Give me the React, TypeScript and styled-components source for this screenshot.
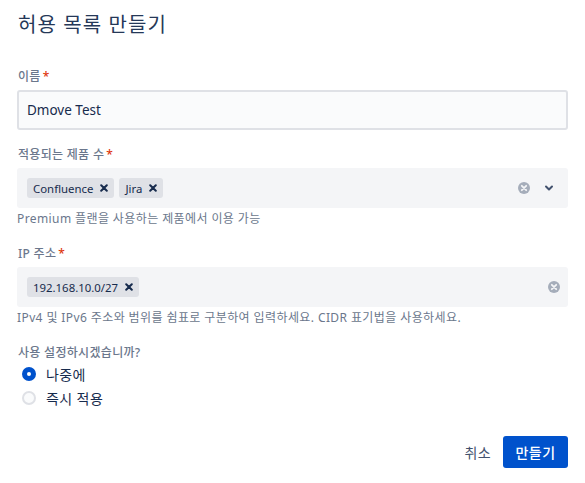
import React from "react";
import styled, { createGlobalStyle } from "styled-components";

const Global = createGlobalStyle`
  html, body { margin: 0; padding: 0; background: #fff; }
  body { font-family: "Noto Sans", "Noto Sans CJK KR", sans-serif; color: #172B4D; }
  * { box-sizing: border-box; }
`;

const Page = styled.div`
  width: 585px;
  height: 483px;
  padding: 13px 17px 0 17px;
  display: flex;
  flex-direction: column;
`;

const Title = styled.h1`
  margin: 0 0 0 1px;
  font-size: 20px;
  line-height: 24px;
  font-weight: 400;
  color: #253858;
  letter-spacing: 1.1px;
`;

const Field = styled.div<{ $top: number }>`
  display: flex;
  flex-direction: column;
  margin-top: ${(p) => p.$top}px;
`;

const Label = styled.label`
  font-size: 12px;
  line-height: 16px;
  font-weight: 500;
  color: #6B778C;
  margin: 0 0 5px 1px;
  letter-spacing: 0.3px;
`;

const Req = styled.span`
  color: #DE350B;
  margin-left: 2px;
`;

const TextInput = styled.div`
  height: 40px;
  background: #FAFBFC;
  border: 2px solid #DFE1E6;
  border-radius: 3px;
  display: flex;
  align-items: center;
  padding: 0 8px;
  font-size: 13.5px;
  color: #172B4D;
`;

const SelectBox = styled.div`
  height: 40px;
  background: #F4F5F7;
  border: 2px solid #F4F5F7;
  border-radius: 3px;
  display: flex;
  align-items: center;
  padding: 0 0 0 8px;
`;

const Tags = styled.div`
  flex: 1;
  display: flex;
  gap: 5px;
  align-items: center;
`;

const Tag = styled.span`
  height: 20px;
  display: inline-flex;
  align-items: center;
  background: #DFE1E6;
  border-radius: 3px;
  padding: 0 4px 0 6px;
  font-size: 11.4px;
  color: #172B4D;
  gap: 5px;
`;

const TagX = styled.span`
  width: 12px;
  height: 14px;
  display: inline-flex;
  align-items: center;
  justify-content: center;
`;

const Indicators = styled.div<{ $right: number }>`
  display: flex;
  align-items: center;
  gap: 12px;
  padding-right: ${(p) => p.$right}px;
`;

const Help = styled.div`
  font-size: 12px;
  line-height: 16px;
  color: #6B778C;
  margin: 3px 0 0 0;
  letter-spacing: 0.4px;
`;

const Radio = styled.div`
  display: flex;
  align-items: center;
  height: 24px;
  gap: 10px;
  padding-left: 5px;
  font-size: 14px;
  color: #172B4D;
  letter-spacing: 0.4px;
`;

const Dot = styled.span<{ $on?: boolean }>`
  width: 14px;
  height: 14px;
  border-radius: 50%;
  background: ${(p) => (p.$on ? "#0052CC" : "#FAFBFC")};
  border: 2px solid ${(p) => (p.$on ? "#0052CC" : "#DFE1E6")};
  display: inline-flex;
  align-items: center;
  justify-content: center;
  &::after {
    content: "";
    width: 4px;
    height: 4px;
    border-radius: 50%;
    background: ${(p) => (p.$on ? "#fff" : "transparent")};
  }
`;

const RadioGroup = styled.div`
  display: flex;
  flex-direction: column;
  margin-top: -4px;
`;

const Footer = styled.div`
  display: flex;
  justify-content: flex-end;
  align-items: center;
  gap: 12px;
  margin-top: 26px;
`;

const Ghost = styled.button`
  height: 32px;
  padding: 0;
  border: none;
  background: transparent;
  font-family: inherit;
  font-size: 14px;
  color: #42526E;
  letter-spacing: 0.4px;
`;

const Primary = styled.button`
  height: 32px;
  width: 65px;
  border: none;
  border-radius: 3px;
  background: #0052CC;
  color: #fff;
  font-family: inherit;
  font-size: 14px;
  font-weight: 500;
  letter-spacing: 0.4px;
`;

const X = () => (
  <TagX>
    <svg width="8" height="8" viewBox="0 0 8 8">
      <path d="M1.2 1.2L6.8 6.8M6.8 1.2L1.2 6.8" stroke="#172B4D" strokeWidth="2" strokeLinecap="round" />
    </svg>
  </TagX>
);

const Clear = () => (
  <svg width="14" height="14" viewBox="0 0 14 14">
    <circle cx="7" cy="7" r="6" fill="#A5ADBA" />
    <path d="M4.8 4.8L9.2 9.2M9.2 4.8L4.8 9.2" stroke="#F4F5F7" strokeWidth="1.8" strokeLinecap="round" />
  </svg>
);

const Chevron = () => (
  <svg width="12" height="12" viewBox="0 0 12 12">
    <path d="M3 4.5L6 7.5L9 4.5" stroke="#42526E" strokeWidth="2" fill="none" strokeLinecap="round" strokeLinejoin="round" />
  </svg>
);

export default function App() {
  return (
    <>
      <Global />
      <Page>
        <Title>허용 목록 만들기</Title>
        <Field $top={32}>
          <Label>이름<Req>*</Req></Label>
          <TextInput>Dmove Test</TextInput>
        </Field>
        <Field $top={17}>
          <Label>적용되는 제품 수<Req>*</Req></Label>
          <SelectBox>
            <Tags>
              <Tag>Confluence<X /></Tag>
              <Tag>Jira<X /></Tag>
            </Tags>
            <Indicators $right={11}>
              <Clear />
              <Chevron />
            </Indicators>
          </SelectBox>
          <Help>Premium 플랜을 사용하는 제품에서 이용 가능</Help>
        </Field>
        <Field $top={19}>
          <Label>IP 주소<Req>*</Req></Label>
          <SelectBox>
            <Tags>
              <Tag>192.168.10.0/27<X /></Tag>
            </Tags>
            <Indicators $right={5}>
              <Clear />
            </Indicators>
          </SelectBox>
          <Help>IPv4 및 IPv6 주소와 범위를 쉼표로 구분하여 입력하세요. CIDR 표기법을 사용하세요.</Help>
        </Field>
        <Field $top={19}>
          <Label>사용 설정하시겠습니까?</Label>
          <RadioGroup>
            <Radio><Dot $on />나중에</Radio>
            <Radio><Dot />즉시 적용</Radio>
          </RadioGroup>
        </Field>
        <Footer>
          <Ghost>취소</Ghost>
          <Primary>만들기</Primary>
        </Footer>
      </Page>
    </>
  );
}
